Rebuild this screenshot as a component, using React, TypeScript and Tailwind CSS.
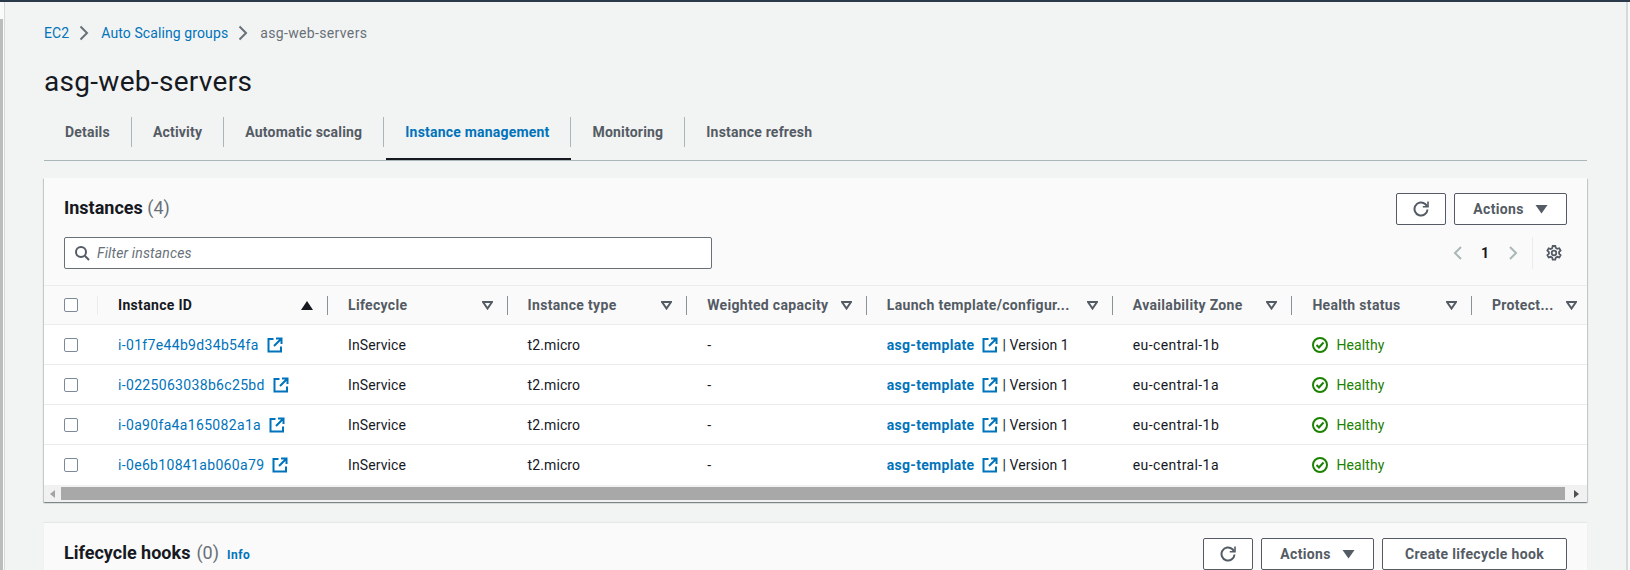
import React from "react";
const Ext = () => (
  <svg width="16" height="16" viewBox="0 0 16 16" fill="none" stroke="#0073bb" strokeWidth="2" className="shrink-0">
    <path d="M6.500 2H1.500v12.500H14V9.500" />
    <path d="M9 1.500h5.500V7M14 2L7 9" />
  </svg>
);
const Refresh = () => (
  <svg width="16" height="16" viewBox="0 0 16 16" fill="none" stroke="#545b64" strokeWidth="2">
    <path d="M14.500 8.500a6.500 6.500 0 1 1-2-5.200L14 5" />
    <path d="M15 .5v5.200H9.800" strokeWidth="1.6" />
  </svg>
);
const Caret = () => (
  <svg width="13" height="9" viewBox="0 0 13 9" className="shrink-0"><path d="M.5 0h12L6.500 8.500z" fill="#545b64" /></svg>
);
const SortDown = () => (
  <svg width="11" height="9" viewBox="0 0 11 9" className="shrink-0"><path d="M1 1h9L5.500 7.500z" fill="none" stroke="#545b64" strokeWidth="2" /></svg>
);
const Box = () => <div className="w-[14px] h-[14px] border border-[#7d8998] rounded-[2px] bg-white" />;
const Btn = ({ children, className = "" }: { children: React.ReactNode; className?: string }) => (
  <div className={`h-8 border border-[#545b64] rounded-[2px] bg-white flex items-center justify-center text-[14px] font-bold tracking-[0.32px] text-[#545b64] ${className}`}>{children}</div>
);
const Chevron = () => (
  <svg width="16" height="16" viewBox="0 0 16 16" fill="none" stroke="#687078" strokeWidth="2" className="ml-[7px] mr-[9px]"><path d="M4.500 1.500L11 8l-6.500 6.500" /></svg>
);
const columns = "grid-cols-[54px_230px_179.6px_179.6px_179.6px_246px_179.6px_179.6px_115px]";
const heads = ["Lifecycle", "Instance type", "Weighted capacity", "Launch template/configur...", "Availability Zone", "Health status", "Protect..."];
const rows = [
  ["i-01f7e44b9d34b54fa", "eu-central-1b"],
  ["i-0225063038b6c25bd", "eu-central-1a"],
  ["i-0a90fa4a165082a1a", "eu-central-1b"],
  ["i-0e6b10841ab060a79", "eu-central-1a"],
];
const Divider = () => <div className="w-px h-[19px] bg-[#879596] shrink-0" />;
export default function App() {
  return (
    <div className="w-[1630px] h-[570px] overflow-hidden bg-[#f2f3f3] flex flex-col text-[14px] text-[#16191f] font-['Roboto','Noto_Sans',sans-serif] relative">
      <div className="h-[2px] bg-[#2b3a4a] shrink-0" />
      <div className="flex-1 flex min-h-0">
        <div className="w-[5px] shrink-0 bg-[#fafafa] border-r border-[#d5dbdb] flex">
          <div className="w-[3px] mt-[17px] bg-[#bcbcbc]" />
        </div>
        <div className="w-[39px] shrink-0" />
        <div className="w-[1543px] shrink-0 flex flex-col">
          <div className="flex items-center h-5 mt-[21px] tracking-[0.1px]">
            <span className="text-[#0073bb]">EC2</span>
            <Chevron />
            <span className="text-[#0073bb]">Auto Scaling groups</span>
            <Chevron />
            <span className="text-[#687078] tracking-[0.35px]">asg-web-servers</span>
          </div>
          <h1 className="text-[28px] leading-9 mt-[21px] font-normal tracking-[0.3px]">asg-web-servers</h1>
          <div className="flex mt-[17px] h-[44px] border-b border-[#aab7b8] relative font-bold tracking-[0.2px] text-[#545b64] items-start shrink-0">
            {["Details", "Activity", "Automatic scaling", "Instance management", "Monitoring", "Instance refresh"].map((t, i) => (
              <div key={t} className={`h-[30px] flex items-center px-[21px] ${i < 5 ? "border-r border-[#aab7b8]" : ""} ${i === 3 ? "text-[#0073bb]" : ""}`}>{t}</div>
            ))}
            <div className="absolute left-[342px] bottom-0 w-[185px] h-[2px] bg-[#16191f]" />
          </div>
          <section className="mt-[17px] bg-white shadow-[0_1px_1px_0_rgba(0,28,36,0.3),1px_1px_1px_0_rgba(0,28,36,0.15),-1px_1px_1px_0_rgba(0,28,36,0.15)] flex flex-col h-[324px] shrink-0">
            <div className="bg-[#fafafa] h-[108px] border-b border-[#eaeded] px-5 pt-[15px] shrink-0">
              <div className="flex justify-between h-8">
                <div className="text-[18px] font-bold leading-[26px] mt-[2px]">Instances <span className="font-normal text-[#687078]">(4)</span></div>
                <div className="flex gap-2">
                  <Btn className="w-[50px]"><Refresh /></Btn>
                  <Btn className="w-[113px] gap-[11px]">Actions <Caret /></Btn>
                </div>
              </div>
              <div className="flex justify-between mt-[12px] h-8 items-center">
                <div className="w-[648px] h-8 border border-[#687078] rounded-[2px] bg-white flex items-center pl-[9px] gap-[7px]">
                  <svg width="16" height="16" viewBox="0 0 16 16" fill="none" stroke="#545b64" strokeWidth="2"><circle cx="7" cy="7" r="5" /><path d="M11 11l4 4" /></svg>
                  <span className="italic text-[#687078] tracking-[0.15px]">Filter instances</span>
                </div>
                <div className="flex items-center h-8 text-[#545b64] pr-[5px]">
                  <svg width="16" height="16" viewBox="0 0 16 16" fill="none" stroke="#aab7b8" strokeWidth="2"><path d="M12 2L6 8l6 6" /></svg>
                  <span className="w-[40px] text-center font-bold text-[#16191f]">1</span>
                  <svg width="16" height="16" viewBox="0 0 16 16" fill="none" stroke="#aab7b8" strokeWidth="2"><path d="M5 2l6 6-6 6" /></svg>
                  <div className="w-px h-8 bg-[#eaeded] ml-[11px] mr-[13px]" />
                  <svg width="16" height="16" viewBox="0 0 16 16" fill="none" stroke="#545b64" strokeWidth="1.8"><path d="M6.700 1h2.600l.5 2 1.500.8 2-.6 1.300 2.300-1.500 1.400v1.800l1.500 1.400-1.300 2.300-2-.6-1.500.8-.5 2H6.700l-.5-2-1.500-.8-2 .6-1.300-2.300 1.500-1.400V7.100L1.400 5.700l1.300-2.300 2 .6 1.500-.8z" /><circle cx="8" cy="8" r="2.300" /></svg>
                </div>
              </div>
            </div>
            <div className="bg-white flex-1 flex flex-col min-h-0 overflow-hidden">
              <div className={`grid ${columns} h-[39px] bg-[#fafafa] border-b border-[#eaeded] items-center font-bold tracking-[0.32px] text-[#545b64] shrink-0`}>
                <div className="flex items-center pl-5 justify-between h-full">
                  <Box />
                  <div className="w-px h-[19px] bg-[#eaeded]" />
                </div>
                <div className="flex items-center justify-between pl-5 text-[#16191f]">
                  <span>Instance ID</span>
                  <span className="flex items-center gap-[14px]">
                    <svg width="12" height="9" viewBox="0 0 12 9"><path d="M6 0l6 9H0z" fill="#16191f" /></svg>
                    <Divider />
                  </span>
                </div>
                {heads.map((h, i) => (
                  <div key={h} className={`flex items-center justify-between pl-5 min-w-0 ${i === 6 ? "pr-[10px]" : ""}`}>
                    <span className="whitespace-nowrap">{h}</span>
                    <span className="flex items-center gap-[14px]">
                      <SortDown />
                      {i < 6 && <Divider />}
                    </span>
                  </div>
                ))}
              </div>
              {rows.map(([id, az], i) => (
                <div key={id} className={`grid ${columns} h-[40px] items-center shrink-0 border-b ${i === 3 ? "border-transparent" : "border-[#eaeded]"} text-[#16191f] tracking-[0.1px]`}>
                  <div className="pl-5"><Box /></div>
                  <div className="pl-5 flex items-center gap-2 text-[#0073bb] tracking-[0.33px]"><span className="pt-[2px]">{id}</span><Ext /></div>
                  <div className="pl-5 pt-[2px]">InService</div>
                  <div className="pl-5 pt-[2px]">t2.micro</div>
                  <div className="pl-5 pt-[2px]">-</div>
                  <div className="pl-5 flex items-center whitespace-nowrap"><span className="font-bold text-[#0073bb] mr-2 tracking-[0.3px] pt-[2px]">asg-template</span><Ext /><span className="ml-1 pt-[2px]">| Version 1</span></div>
                  <div className="pl-5 pt-[2px] tracking-[0.4px]">{az}</div>
                  <div className="pl-5 flex items-center gap-2 text-[#1d8102]">
                    <svg width="16" height="16" viewBox="0 0 16 16" fill="none" stroke="#1d8102" strokeWidth="2"><circle cx="8" cy="8" r="7" /><path d="M4.500 8l2.500 2.500 4.500-5" /></svg>
                    <span className="pt-[2px]">Healthy</span>
                  </div>
                  <div />
                </div>
              ))}
              <div className="h-[17px] bg-[#f1f1f1] flex items-center shrink-0">
                <div className="w-[17px] flex justify-center"><span className="block border-y-[4px] border-y-transparent border-r-[5px] border-r-[#a3a3a3]" /></div>
                <div className="flex-1 h-[13px] bg-[#a8a8a8]" />
                <div className="w-[22px] flex justify-center"><span className="block border-y-[4px] border-y-transparent border-l-[5px] border-l-[#505050]" /></div>
              </div>
            </div>
          </section>
          <section className="mt-[21px] bg-[#fafafa] shadow-[0_-1px_1px_0_rgba(0,28,36,0.05)] flex-1 px-5 pt-[15px]">
            <div className="flex justify-between">
              <div className="flex items-baseline mt-[1px]">
                <span className="text-[18px] font-bold">Lifecycle hooks</span>
                <span className="text-[18px] text-[#687078] ml-[6px]">(0)</span>
                <span className="text-[12px] font-bold text-[#0073bb] ml-2 tracking-[0.5px]">Info</span>
              </div>
              <div className="flex gap-2">
                <Btn className="w-[50px]"><Refresh /></Btn>
                <Btn className="w-[113px] gap-[11px]">Actions <Caret /></Btn>
                <Btn className="w-[185px]">Create lifecycle hook</Btn>
              </div>
            </div>
          </section>
        </div>
        <div className="flex-1 flex justify-end">
          <div className="w-[4px] bg-[#fafafa] border-l-[2px] border-[#d5dbdb]" />
        </div>
      </div>
    </div>
  );
}
